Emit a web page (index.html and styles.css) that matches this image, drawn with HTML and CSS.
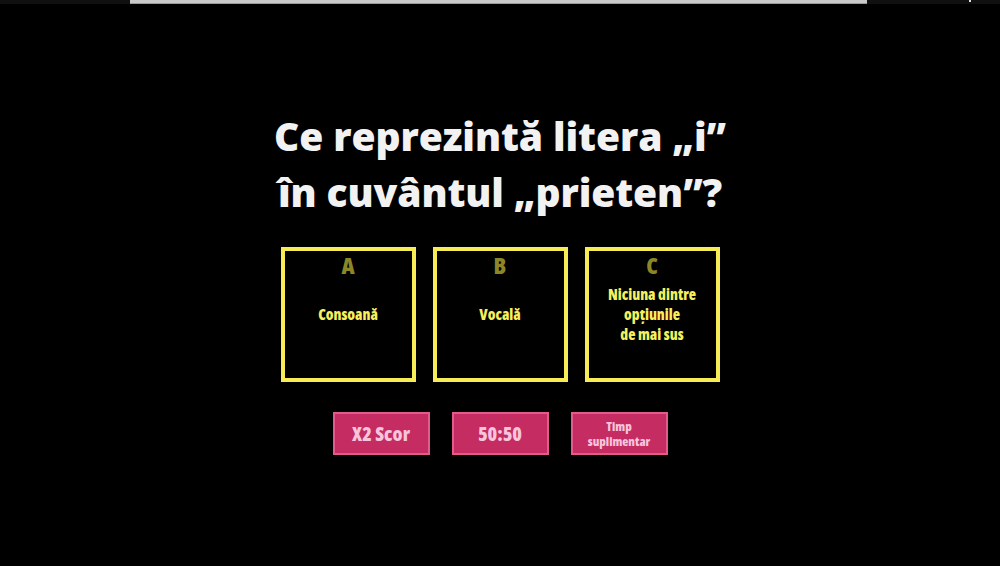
FILE: index.html
```html
<!DOCTYPE html>
<html lang="ro">
<head>
<meta charset="utf-8">
<link rel="stylesheet" href="styles.css">
</head>
<body>
<div class="topstrip"><div class="thumb"></div><span class="dot"></span></div>
<main class="quiz">
  <h1 class="question">Ce reprezintă litera „i”<br>în cuvântul „prieten”?</h1>
  <div class="choices">
    <div class="choice"><span class="letter">A</span><span class="answer">Consoană</span></div>
    <div class="choice"><span class="letter">B</span><span class="answer">Vocală</span></div>
    <div class="choice"><span class="letter">C</span><span class="answer">Niciuna dintre<br>opțiunile<br>de mai sus</span></div>
  </div>
  <div class="boosts">
    <button class="boost big">X2 Scor</button>
    <button class="boost big">50:50</button>
    <button class="boost small">Timp<br>suplimentar</button>
  </div>
</main>
</body>
</html>
```
FILE: styles.css
```css
html,body{margin:0;padding:0;background:#000;height:100%;overflow:hidden}
body{font-family:"Open Sans","Noto Sans",sans-serif}
.topstrip{height:4px;background:#101010;display:flex;position:relative}
.thumb{margin-left:130px;width:737px;height:4px;background:#c9c9c9;box-shadow:inset 0 -1px 0 #9a9a9a}
.dot{position:absolute;left:969px;top:0;width:2px;height:2px;background:#ddd}
.quiz{display:flex;flex-direction:column;align-items:center}
.question{margin:104px 0 0;color:#f2f2f2;font-size:39px;line-height:56px;font-weight:800;font-stretch:100%;text-align:center;letter-spacing:-0.1px}
.choices{display:flex;gap:17px;margin-top:27px}
.choice{width:127px;height:127px;border:4px solid #f6ec55;display:grid;grid-template-areas:"all";justify-items:center}
.letter{grid-area:all;align-self:start;margin-top:-1px;color:#8b8627;font-size:23px;font-weight:800;font-stretch:75%;line-height:30px}
.answer{grid-area:all;align-self:center;color:#f7ef5e;font-size:15px;font-weight:800;font-stretch:75%;line-height:20px;text-align:center;margin-top:-2px}
.boosts{display:flex;gap:22px;margin-top:30px}
.boost{width:97px;height:43px;box-sizing:border-box;background:#c42c62;border:2px solid #e35a8e;color:#f8c4db;font-family:inherit;font-weight:800;padding:0;display:flex;align-items:center;justify-content:center;text-align:center}
.boost.big{font-size:19.5px;font-stretch:75%}
.boost.small{font-size:12.5px;line-height:15px;font-stretch:75%}
```
